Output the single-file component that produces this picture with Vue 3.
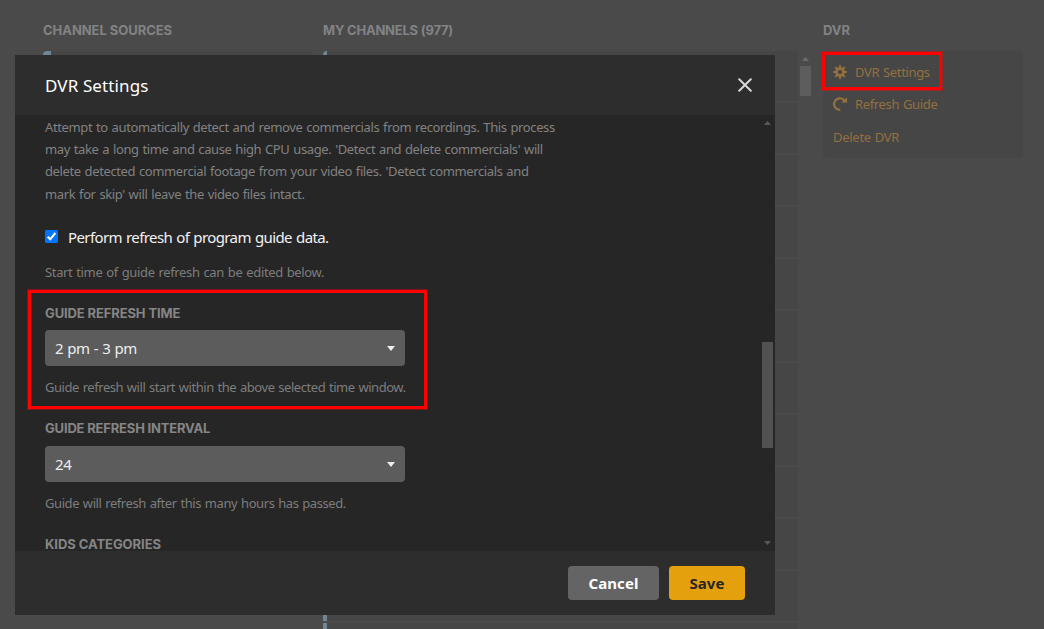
<script setup>
import { ref } from 'vue'

const refresh = ref(true)
const rows = Array.from({ length: 12 }, (_, i) => i)
const teeth = [0, 45, 90, 135, 180, 225, 270, 315]
const description = [
  'Attempt to automatically detect and remove commercials from recordings. This process',
  "may take a long time and cause high CPU usage. 'Detect and delete commercials' will",
  "delete detected commercial footage from your video files. 'Detect commercials and",
  "mark for skip' will leave the video files intact.",
]
</script>

<template>
  <div class="screen">
    <div class="page">
      <section class="sources">
        <h2>CHANNEL SOURCES</h2>
        <div class="source-card"></div>
      </section>
      <section class="channels">
        <h2>MY CHANNELS (977)</h2>
        <div class="channel-list">
          <div v-for="r in rows" :key="r" class="channel"></div>
        </div>
      </section>
      <div class="page-scroll">
        <svg width="7" height="4" viewBox="0 0 7 4"><path d="M0 4L3.5 0L7 4Z" fill="#6a6a6a" /></svg>
        <div class="page-thumb"></div>
      </div>
      <section class="dvr">
        <h2>DVR</h2>
        <nav class="dvr-card">
          <a>
            <svg width="14" height="14" viewBox="0 0 14 14">
              <circle cx="7" cy="7" r="3.500" fill="none" stroke="#97713f" stroke-width="2.600" />
              <path v-for="t in teeth" :key="t" d="M6.200 0H7.800L8.200 3H5.800Z" :transform="`rotate(${t} 7 7)`" fill="#97713f" />
            </svg>
            <span>DVR Settings</span>
          </a>
          <a>
            <svg width="14" height="14" viewBox="0 0 14 14">
              <path d="M7.300 12.900A5.800 5.800 0 1 1 11.600 3.700" fill="none" stroke="#97713f" stroke-width="2.100" />
              <path d="M14 .3V5.600H8.300Z" fill="#97713f" />
            </svg>
            <span>Refresh Guide</span>
          </a>
          <a class="delete"><span>Delete DVR</span></a>
        </nav>
      </section>
    </div>

    <div class="modal">
      <header>
        <h1>DVR Settings</h1>
        <svg width="14" height="14" viewBox="0 0 14 14">
          <path d="M1.200 1.200L12.800 12.800M12.800 1.200L1.200 12.800" stroke="#d8d8d8" stroke-width="2" stroke-linecap="round" />
        </svg>
      </header>
      <div class="body">
        <div class="form">
          <p class="description"><span v-for="(l, i) in description" :key="i">{{ l }}</span></p>
          <label class="check">
            <input v-model="refresh" type="checkbox" />
            <svg width="13" height="13" viewBox="0 0 13 13">
              <rect width="13" height="13" rx="1.500" fill="#0075ff" />
              <path d="M2.700 6.700L5.200 9.300L10.300 3" fill="none" stroke="#fff" stroke-width="2" />
            </svg>
            <span>Perform refresh of program guide data.</span>
          </label>
          <p class="hint start">Start time of guide refresh can be edited below.</p>
          <h3 class="time">GUIDE REFRESH TIME</h3>
          <div class="select">
            <span>2 pm - 3 pm</span>
            <svg width="8" height="5" viewBox="0 0 8 5"><path d="M0 0H8L4 5Z" fill="#eee" /></svg>
          </div>
          <p class="hint window">Guide refresh will start within the above selected time window.</p>
          <h3 class="interval">GUIDE REFRESH INTERVAL</h3>
          <div class="select">
            <span>24</span>
            <svg width="8" height="5" viewBox="0 0 8 5"><path d="M0 0H8L4 5Z" fill="#eee" /></svg>
          </div>
          <p class="hint hours">Guide will refresh after this many hours has passed.</p>
          <h3 class="kids">KIDS CATEGORIES</h3>
        </div>
        <div class="scroll">
          <svg width="7" height="4" viewBox="0 0 7 4"><path d="M0 4L3.5 0L7 4Z" fill="#595959" /></svg>
          <div class="thumb"></div>
          <svg width="7" height="4" viewBox="0 0 7 4"><path d="M0 0H7L3.5 4Z" fill="#595959" /></svg>
        </div>
      </div>
      <footer>
        <button class="cancel">Cancel</button>
        <button class="save">Save</button>
      </footer>
    </div>
    <div class="mark mark-menu"></div>
    <div class="mark mark-field"></div>
  </div>
</template>

<style>
body { margin: 0; background: #4a4a4a; }
</style>

<style scoped>
* { box-sizing: border-box; }
h1, h2, h3, p { margin: 0; font-weight: 400; }
svg { display: block; flex: none; }
.screen {
  position: relative;
  width: 1044px;
  height: 629px;
  overflow: hidden;
  background: #4a4a4a;
  font-family: "Noto Sans", "Open Sans", sans-serif;
  font-size: 13px;
  white-space: nowrap;
}
.page { display: flex; padding: 20px 0 0 43px; }
h2, h3 {
  font: 700 13px/20px Inter, "Noto Sans", sans-serif;
  color: #818385;
}
h2 { margin-bottom: 11px; letter-spacing: -0.05px; }
.sources { width: 270px; margin-right: 10px; }
.source-card { height: 60px; border-left: 8px solid #708695; border-radius: 4px; background: #464646; }
.channels { width: 475px; }
.channels h2 { letter-spacing: -0.22px; }
.channel-list { display: flex; flex-direction: column; gap: 2px; }
.channel { flex: none; height: 50px; background: #464646; border-left: 4px solid #708695; }
.channel:first-child { border-radius: 4px 4px 0 0; }
.page-scroll { width: 11px; margin: 37px 12px 0 2px; display: flex; flex-direction: column; align-items: center; gap: 5px; }
.page-thumb { width: 11px; height: 30px; background: #5d5d5d; }
.dvr { width: 200px; }
.dvr-card { height: 107px; padding: 5px 10px; border-radius: 4px; background: #464646; letter-spacing: -0.35px; word-spacing: 0.8px; }
.dvr-card a { display: flex; align-items: center; gap: 8px; height: 32px; color: #94703f; }
.dvr-card .delete { height: 34px; letter-spacing: -0.28px; }

.modal {
  position: absolute;
  left: 15px;
  top: 55px;
  width: 760px;
  height: 560px;
  display: flex;
  flex-direction: column;
  background: #2d2d2d;
}
header { height: 60px; padding: 0 23px 0 30px; display: flex; align-items: center; justify-content: space-between; }
h1 { font-size: 17px; color: #fff; line-height: 24px; padding-top: 2px; letter-spacing: 0.12px; }
.body { height: 436px; display: flex; justify-content: space-between; background: #262626; }
.form { width: 542px; padding: 1px 0 0 30px; }
.description { display: flex; flex-direction: column; color: #828282; line-height: 22.200px; letter-spacing: -0.38px; word-spacing: 0.8px; }
.check { height: 24px; margin-top: 20px; display: flex; align-items: center; gap: 10px; font-size: 15px; letter-spacing: -0.6px; word-spacing: 0.75px; color: #f2f2f2; }
.check input { display: none; }
.check svg { margin-top: -1px; }
.hint { width: max-content; height: 22px; line-height: 22px; color: #7d7d7d; word-spacing: 0.8px; }
.start { margin-top: 12px; margin-bottom: 20px; letter-spacing: -0.35px; }
h3 { height: 20px; color: #858585; width: max-content; }
.time { letter-spacing: -0.12px; }
.interval { letter-spacing: -0.18px; }
.kids { letter-spacing: -0.05px; height: 18px; }
.select { margin-top: 7px; width: 360px; height: 36px; padding: 0 10px; border-radius: 4px; background: #5c5c5c; color: #eee; font-size: 15px; letter-spacing: -0.45px; word-spacing: 0.7px; display: flex; align-items: center; justify-content: space-between; }
.select svg { margin-top: 2px; }
.window { margin: 10px 0 20px; letter-spacing: -0.45px; }
.hours { margin: 10px 0 20px; letter-spacing: -0.42px; }
.interval + .select { margin-top: 8px; }
.scroll { width: 11px; margin-right: 2px; padding: 6px 0; display: flex; flex-direction: column; align-items: center; }
.thumb { width: 11px; height: 106px; margin: 217px 0 93px; background: #515151; }
footer { height: 64px; padding: 0 30px; display: flex; align-items: center; justify-content: flex-end; gap: 10px; }
button { height: 34px; padding: 0; border: 0; border-radius: 4px; font: 700 15px/34px "Noto Sans", sans-serif; letter-spacing: 0.1px; }
.cancel { width: 91px; background: #646464; color: #fff; }
.save { width: 76px; background: #e5a00d; color: #262626; }
.mark { position: absolute; border: 3px solid #f00; box-shadow: 0 0 0 1px rgba(255, 0, 0, 0.4); }
.mark-menu { left: 822px; top: 52px; width: 120px; height: 38px; }
.mark-field { left: 28px; top: 290px; width: 399px; height: 119px; }
</style>
